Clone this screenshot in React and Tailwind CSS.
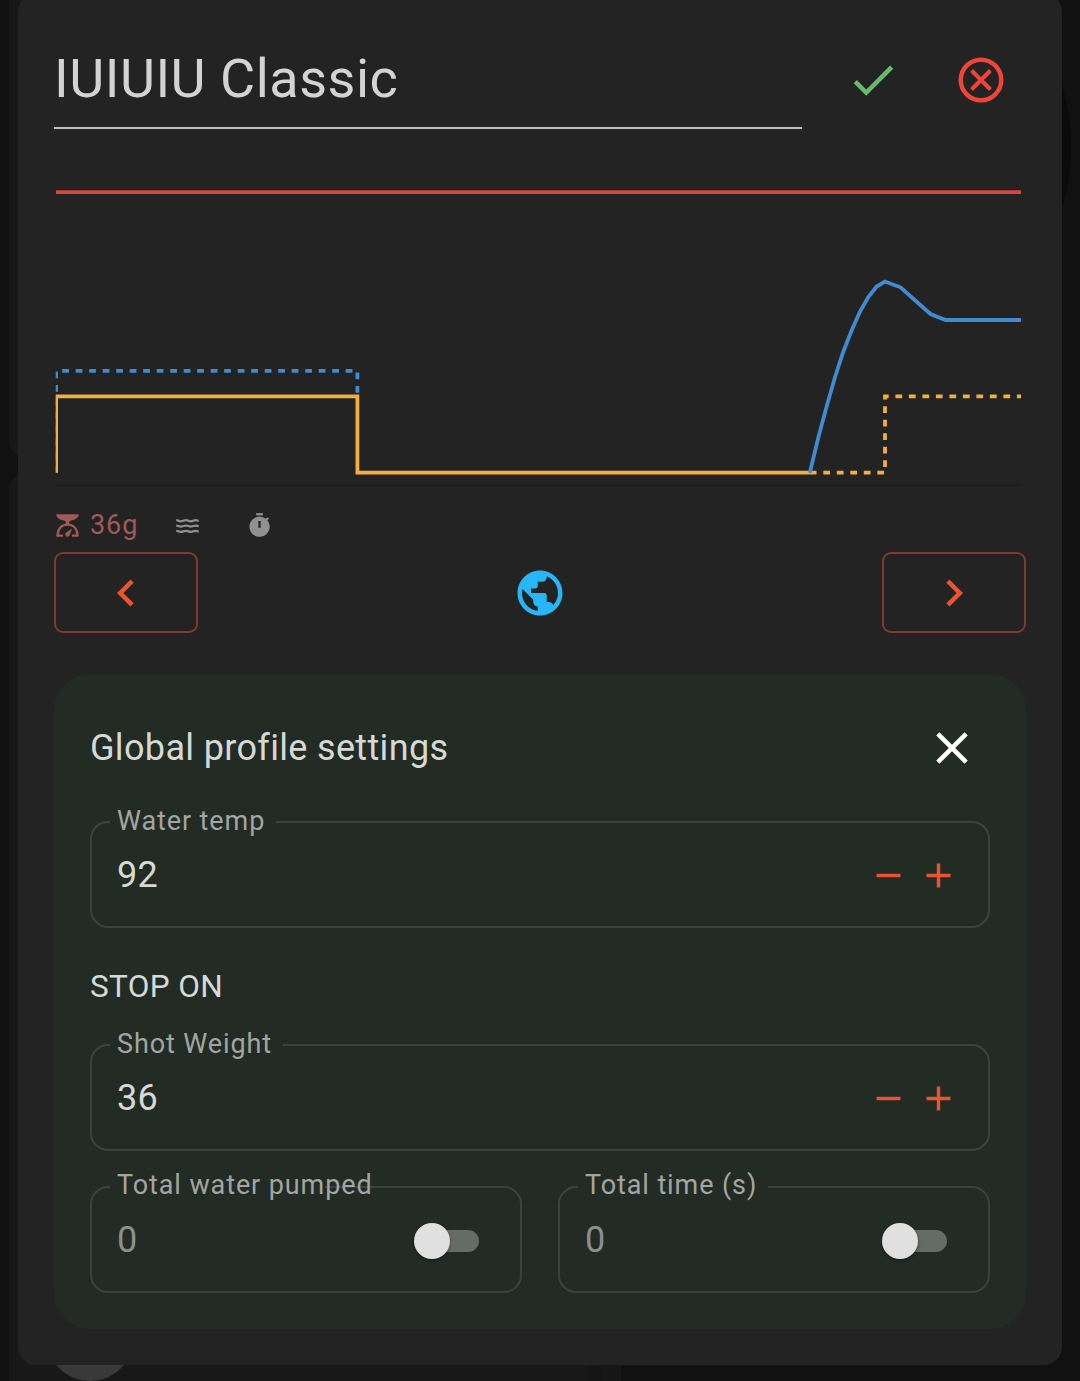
import React from "react";
import {
  MdAdd,
  MdCheck,
  MdChevronLeft,
  MdChevronRight,
  MdClose,
  MdPublic,
  MdRemove,
} from "react-icons/md";

function Backdrop() {
  return (
    <div className="absolute inset-0 overflow-hidden bg-[#111111]">
      <div className="absolute -top-8 left-[9px] h-[489px] w-[594px] rounded-[16px] bg-[#181818]" />
      <div className="absolute left-[9px] top-[473px] h-[940px] w-[581px] rounded-[16px] bg-[#181818]" />
      <div className="absolute bottom-0 left-[590px] h-4 w-[31px] bg-[#151515]" />
      <div className="absolute bottom-0 left-[602px] h-4 w-[19px] bg-[#171717]" />
      <div className="absolute left-[635px] top-[-71px] size-[436px] rounded-full bg-[#0b0b0b]" />
      <div className="absolute left-[46px] top-[1293px] size-[88px] rounded-full bg-[#393939]" />
    </div>
  );
}

function ShotChart() {
  return (
    <svg className="block h-[340px] w-[972px]" viewBox="54 160 972 340" fill="none">
      <clipPath id="plot">
        <rect x="55.7" y="160" width="965.3" height="340" />
      </clipPath>
      <g clipPath="url(#plot)" strokeWidth="3.8">
        <path d="M56 485.5H1021" stroke="#1f1f1f" strokeWidth="2" />
        <path d="M56 192.2H1021" stroke="#d8473f" />
        <path
          d="M56.1 472.7V370.8H357.4V396"
          stroke="#428bd0"
          strokeDasharray="6.75 6.75"
        />
        <path d="M56.1 472.7V396.3H357.4V472.7H809.8" stroke="#f3ae40" />
        <path
          d="M809.8 472.7H885V396.3H1021"
          stroke="#f3ae40"
          strokeDasharray="6.75 6.75"
        />
        <path
          d="M809.8 472.7L818.2 438L826.5 407L834.9 377.5L843.2 352L851.6 330.5L860 311.5L868.3 297L876.7 286.5L885 281.5L900.5 287.3L930.5 314L945.5 320H1021"
          stroke="#428bd0"
        />
      </g>
    </svg>
  );
}

function CancelIcon() {
  return (
    <svg
      className="size-[54px] text-[#ef4437]"
      viewBox="0 0 24 24"
      fill="none"
      stroke="currentColor"
      strokeWidth="2"
    >
      <circle cx="12" cy="12" r="9" />
      <path d="M7.8 7.8L16.2 16.2M16.2 7.8L7.8 16.2" strokeWidth="1.8" />
    </svg>
  );
}

function ScaleIcon() {
  return (
    <svg className="size-[27px]" viewBox="0 0 24 24" fill="currentColor">
      <path d="M2 2H22C22 5.2 18.5 7.2 15 7.6L13.5 8.7V11H10.5V8.7L9 7.6C5.5 7.2 2 5.2 2 2Z" />
      <path
        d="M3.2 21C3.2 14.8 6.8 11.3 12 11.3S20.8 14.8 20.8 21"
        fill="none"
        stroke="currentColor"
        strokeWidth="2"
      />
      <path d="M2.2 20H8V22H2.2zM16 20H21.8V22H16z" />
      <path d="M16.2 14.7L13.9 20.5A2 2 0 1 1 11.1 18.1Z" />
    </svg>
  );
}

function WavesIcon() {
  return (
    <svg
      className="size-[27px]"
      viewBox="0 0 24 24"
      fill="none"
      stroke="currentColor"
      strokeWidth="2"
    >
      <path d="M2 7.3C4 7.3 4 8.3 6 8.3S8.7 7.3 10.7 7.3 13 8.3 15 8.3 17.4 7.3 19.2 7.3 20.8 7.9 22 7.9" />
      <path d="M2 12C4 12 4 13 6 13S8.7 12 10.7 12 13 13 15 13 17.4 12 19.2 12 20.8 12.6 22 12.6" />
      <path d="M2 16.7C4 16.7 4 17.7 6 17.7S8.7 16.7 10.7 16.7 13 17.7 15 17.7 17.4 16.7 19.2 16.7 20.8 17.3 22 17.3" />
    </svg>
  );
}

function TimerIcon() {
  return (
    <svg className="size-[27px]" viewBox="0 0 24 24" fill="currentColor">
      <path d="M9 1h6v2H9z" />
      <path
        fillRule="evenodd"
        d="M19.03 7.39l1.42-1.42c-.45-.51-.9-.97-1.41-1.41L17.62 6A9 9 0 1 0 19.03 7.39zM13 14h-2V8h2z"
      />
    </svg>
  );
}

function Field({ label, value, notch, muted, labelTop = "top-[-16px]", className = "", children }) {
  return (
    <div
      className={`relative flex h-[107px] items-center justify-between pl-[27px] ${className}`}
    >
      <fieldset className="pointer-events-none absolute inset-0 rounded-[18px] border-2 border-[#3b433d] pl-[18px]">
        <legend className={`h-0 ${notch}`} />
      </fieldset>
      <span
        className={`absolute left-[27px] whitespace-nowrap text-[27px] leading-8 tracking-[0.9px] text-[#a2a6a3] ${labelTop}`}
      >
        {label}
      </span>
      <span className={`text-[36px] leading-[42px] tracking-[0.2px] ${muted ? "text-[#8b908c]" : "text-[#d6d9d6]"}`}>
        {value}
      </span>
      {children}
    </div>
  );
}

function Stepper() {
  return (
    <div className="mr-[31.5px] mt-px flex items-center gap-[9px] text-[#ea5530]">
      <button aria-label="Decrease">
        <MdRemove className="size-[41px]" />
      </button>
      <button aria-label="Increase">
        <MdAdd className="size-[41px]" />
      </button>
    </div>
  );
}

function Toggle() {
  return (
    <div className="mr-[43px] mt-[3px] flex h-[22px] w-[63px] items-center rounded-full bg-[#656b67]">
      <div className="-ml-0.5 size-9 shrink-0 rounded-full bg-[#e0e0e0] shadow-[0_1px_3px_rgba(0,0,0,0.4)]" />
    </div>
  );
}

export default function App() {
  return (
    <div className="relative h-[1381px] w-[1080px] overflow-hidden font-['Roboto',sans-serif]">
      <Backdrop />
      <div className="relative mx-[18px] -mt-1.5 flex h-[1371px] flex-col rounded-[18px] bg-[#232323] px-9 pb-9 pt-9">
        <header className="flex h-[99px] items-start">
          <div className="flex h-[99px] w-[748px] items-center border-b-2 border-[#bfbcbf] text-[54px] leading-[64px] tracking-[0.5px] text-[#d3d3d3]">
            IUIUIU Classic
          </div>
          <div className="ml-[44px] mt-[23px] flex items-center gap-[54px]">
            <MdCheck className="size-[54px] text-[#66bb6a]" />
            <CancelIcon />
          </div>
        </header>

        <div className="mt-[31px]">
          <ShotChart />
        </div>

        <div className="mt-[9px] flex h-[32px] items-center text-[27px] leading-8 tracking-[0.9px]">
          <div className="flex w-[120px] items-center gap-[9px] text-[#a05a57]">
            <ScaleIcon />
            36g
          </div>
          <div className="w-[72px] text-[#909090]">
            <WavesIcon />
          </div>
          <div className="text-[#909090]">
            <TimerIcon />
          </div>
        </div>

        <div className="mt-[11px] flex items-center justify-between text-[#ea5530]">
          <button className="flex h-[81px] w-[144px] items-center justify-center rounded-[9px] border-2 border-[#7d3c2e]">
            <MdChevronLeft className="size-[54px]" />
          </button>
          <MdPublic className="size-[54px] text-[#29b6f6]" />
          <button className="flex h-[81px] w-[144px] items-center justify-center rounded-[9px] border-2 border-[#7d3c2e]">
            <MdChevronRight className="size-[54px]" />
          </button>
        </div>

        <section className="mt-[41px] h-[655px] rounded-[36px] bg-[#232b25] px-9 pt-9">
          <div className="flex h-[76px] items-center justify-between">
            <h2 className="text-[36px] leading-[42px] tracking-[0.34px] text-[#d6d9d6]">
              Global profile settings
            </h2>
            <MdClose className="mr-[11px] size-[54px] text-white" />
          </div>

          <Field label="Water temp" value="92" notch="w-[166px]" className="mt-[35px]">
            <Stepper />
          </Field>

          <h3 className="mt-[41px] text-[31.5px] leading-[36px] tracking-[0.34px] text-[#d6d9d6]">
            STOP ON
          </h3>

          <Field label="Shot Weight" value="36" notch="w-[173px]" className="mt-[39px]">
            <Stepper />
          </Field>

          <div className="mt-[35px] grid grid-cols-2 gap-9">
            <Field
              label="Total water pumped"
              value="0"
              notch="w-[215px]"
              labelTop="top-[-17px]"
              muted
            >
              <Toggle />
            </Field>
            <Field
              label="Total time (s)"
              value="0"
              notch="w-[190px]"
              labelTop="top-[-17px]"
              muted
            >
              <Toggle />
            </Field>
          </div>
        </section>
      </div>
    </div>
  );
}
